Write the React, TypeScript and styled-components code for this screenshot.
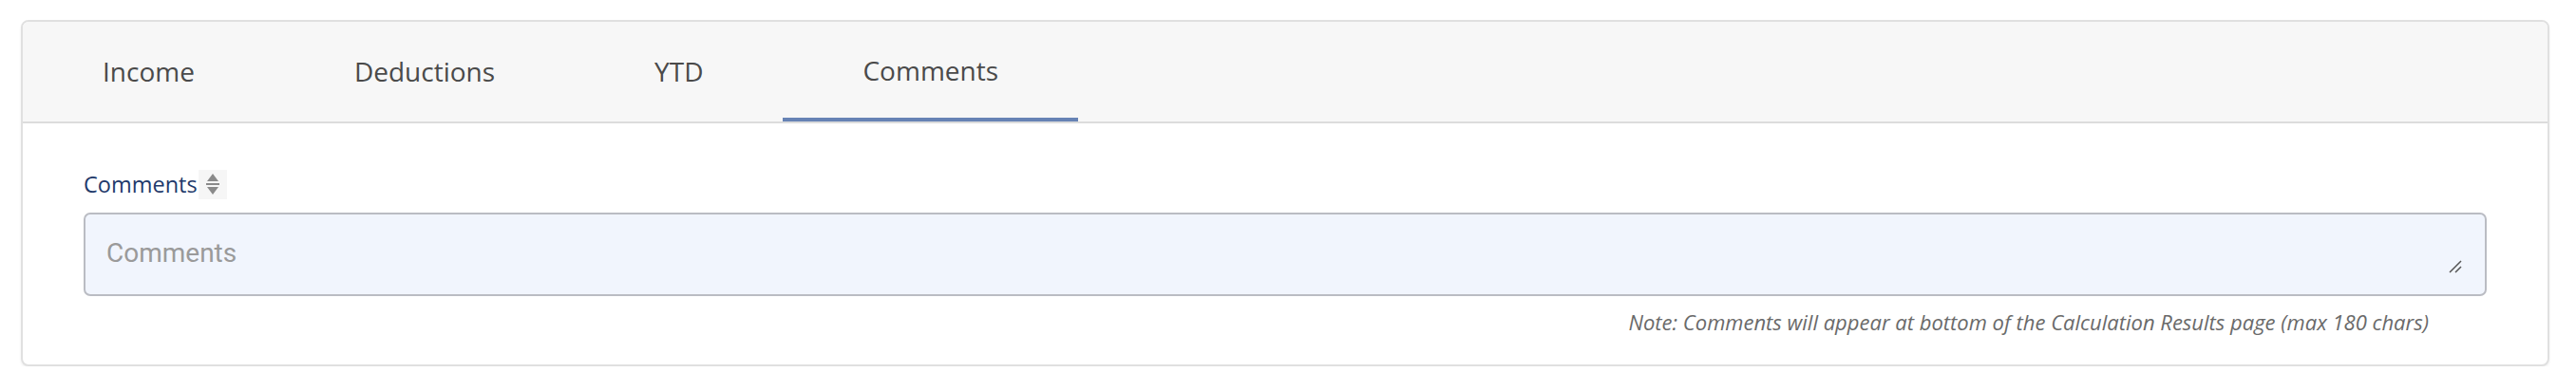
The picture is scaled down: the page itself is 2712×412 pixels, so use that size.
import React, { useState } from 'react';
import styled, { createGlobalStyle } from 'styled-components';

const GlobalStyle = createGlobalStyle`
  body {
    margin: 0;
    background: #ffffff;
    font-family: 'Open Sans', 'Noto Sans', sans-serif;
  }
`;

const Page = styled.div`
  padding: 21px 28px 0 22px;
`;

const Card = styled.div`
  border: 2px solid #e0e0e0;
  border-radius: 8px;
  background: #ffffff;
  box-shadow: 0 2px 3px rgba(0, 0, 0, 0.06);
  overflow: hidden;
`;

const TabBar = styled.div`
  display: flex;
  background: #f7f7f7;
  border-bottom: 2px solid #dcdcdc;
  height: 105px;
`;

const Tab = styled.button<{ $active?: boolean }>`
  display: flex;
  align-items: center;
  padding: ${(p) => (p.$active ? '0' : '3px')} 84px 0;
  border: none;
  border-bottom: 4px solid ${(p) => (p.$active ? '#6783b5' : 'transparent')};
  background: transparent;
  font-family: 'Open Sans', 'Noto Sans', sans-serif;
  font-size: 28px;
  font-weight: 500;
  color: #4a4a4a;
  cursor: pointer;
`;

const Body = styled.div`
  padding: 48px 64px 30px 64px;
`;

const Label = styled.div`
  display: flex;
  align-items: center;
  font-size: 23.5px;
  color: #1f3a6b;
  margin-bottom: 14px;
`;

const SortBox = styled.span`
  display: inline-flex;
  align-items: center;
  justify-content: center;
  width: 30px;
  height: 31px;
  margin-left: 1px;
  background: #f6f6f6;
`;

const FieldWrap = styled.div`
  position: relative;
`;

const TextArea = styled.textarea`
  display: block;
  box-sizing: border-box;
  width: 100%;
  height: 88px;
  padding: 24px 22px 20px;
  border: 2px solid #babcc3;
  border-radius: 7px;
  background: #f1f5fd;
  font-family: Roboto, 'Liberation Sans', sans-serif;
  font-size: 28px;
  color: #333;
  resize: none;
  outline: none;
  &::placeholder {
    color: #9a9a9a;
  }
`;

const Grip = styled.svg`
  position: absolute;
  right: 26px;
  bottom: 24px;
`;

const Note = styled.div`
  margin-top: 12px;
  padding-right: 61px;
  text-align: right;
  font-style: italic;
  font-size: 22px;
  color: #6a6a6a;
`;

const tabs = ['Income', 'Deductions', 'YTD', 'Comments'];

export default function App() {
  const [active, setActive] = useState('Comments');
  const [text, setText] = useState('');
  return (
    <Page>
      <GlobalStyle />
      <Card>
        <TabBar>
          {tabs.map((t) => (
            <Tab key={t} $active={t === active} onClick={() => setActive(t)}>
              {t}
            </Tab>
          ))}
        </TabBar>
        <Body>
          <Label>
            Comments
            <SortBox>
              <svg width="16" height="24" viewBox="0 0 16 24">
                <path d="M8 1 L14 9 L2 9 Z" fill="#8a8a8a" />
                <rect x="1" y="11" width="14" height="2" fill="#8a8a8a" />
                <path d="M2 15 L14 15 L8 23 Z" fill="#8a8a8a" />
              </svg>
            </SortBox>
          </Label>
          <FieldWrap>
            <TextArea
              placeholder="Comments"
              maxLength={180}
              value={text}
              onChange={(e) => setText(e.target.value)}
            />
            <Grip width="14" height="14" viewBox="0 0 14 14">
              <path d="M1 13 L13 1 M7 13 L13 7" stroke="#555" strokeWidth="1.5" />
            </Grip>
          </FieldWrap>
          <Note>
            Note: Comments will appear at bottom of the Calculation Results page (max 180 chars)
          </Note>
        </Body>
      </Card>
    </Page>
  );
}
